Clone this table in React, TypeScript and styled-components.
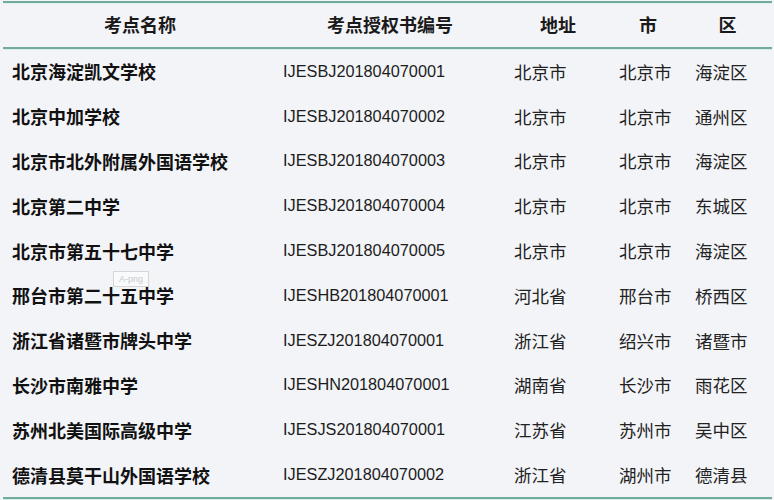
import styled, { createGlobalStyle } from "styled-components";

const GlobalStyle = createGlobalStyle`
  html, body {
    margin: 0;
    padding: 0;
    background: #f3f4f8;
  }
`;

const rows = [
  ["北京海淀凯文学校", "IJESBJ201804070001", "北京市", "北京市", "海淀区"],
  ["北京中加学校", "IJESBJ201804070002", "北京市", "北京市", "通州区"],
  ["北京市北外附属外国语学校", "IJESBJ201804070003", "北京市", "北京市", "海淀区"],
  ["北京第二中学", "IJESBJ201804070004", "北京市", "北京市", "东城区"],
  ["北京市第五十七中学", "IJESBJ201804070005", "北京市", "北京市", "海淀区"],
  ["邢台市第二十五中学", "IJESHB201804070001", "河北省", "邢台市", "桥西区"],
  ["浙江省诸暨市牌头中学", "IJESZJ201804070001", "浙江省", "绍兴市", "诸暨市"],
  ["长沙市南雅中学", "IJESHN201804070001", "湖南省", "长沙市", "雨花区"],
  ["苏州北美国际高级中学", "IJESJS201804070001", "江苏省", "苏州市", "吴中区"],
  ["德清县莫干山外国语学校", "IJESZJ201804070002", "浙江省", "湖州市", "德清县"],
];

const headers = ["考点名称", "考点授权书编号", "地址", "市", "区"];
const pads = [9, 6, 11, 6, 12];

const Page = styled.div`
  position: relative;
  width: 774px;
  height: 500px;
  padding: 1px 2px 0 3px;
  box-sizing: border-box;
  font-family: "Noto Sans CJK SC", sans-serif;
  color: #1c1c1c;
`;

const Table = styled.div`
  border-top: 2px solid #72ab9d;
  border-bottom: 2px solid #72ab9d;
  box-shadow: 0 1px 0 #d6efea, inset 0 1px 0 #dff2ee;
`;

const Row = styled.div<{ $head?: boolean }>`
  display: grid;
  grid-template-columns: 274px 226px 110px 70px 89px;
  height: ${(p) => (p.$head ? "44px" : "44.8px")};
  align-items: center;
  ${(p) =>
    p.$head &&
    `
    border-bottom: 2px solid #72ab9d;
    box-shadow: 0 1px 0 #d6efea;
  `}
`;

const HeadCell = styled.div`
  text-align: center;
  font-size: 18px;
  font-weight: 700;
  color: #1a1a1a;
  padding-bottom: 2px;
`;

const NameCell = styled.div<{ $pad: number }>`
  padding-left: ${(p) => p.$pad}px;
  font-size: 18px;
  font-weight: 700;
  color: #111;
  white-space: nowrap;
`;

const CodeCell = styled.div<{ $pad: number }>`
  padding-left: ${(p) => p.$pad}px;
  font-family: "Liberation Sans", "Noto Sans CJK SC", sans-serif;
  font-size: 16.3px;
  color: #1c1c1c;
  white-space: nowrap;
`;

const PlainCell = styled.div<{ $pad: number }>`
  padding-left: ${(p) => p.$pad}px;
  font-size: 17.5px;
  color: #222;
  white-space: nowrap;
`;

const Watermark = styled.div`
  position: absolute;
  left: 113px;
  top: 271px;
  width: 34px;
  height: 14px;
  border: 1px solid #d6d6d8;
  background: rgba(255, 255, 255, 0.5);
  font-family: "Liberation Sans", sans-serif;
  font-size: 9px;
  color: #c8c8cc;
  display: flex;
  align-items: center;
  justify-content: center;
`;

export default function App() {
  return (
    <>
      <GlobalStyle />
      <Page>
        <Table>
          <Row $head>
            {headers.map((h) => (
              <HeadCell key={h}>{h}</HeadCell>
            ))}
          </Row>
          {rows.map((r) => (
            <Row key={r[1]}>
              <NameCell $pad={pads[0]}>{r[0]}</NameCell>
              <CodeCell $pad={pads[1]}>{r[1]}</CodeCell>
              <PlainCell $pad={pads[2]}>{r[2]}</PlainCell>
              <PlainCell $pad={pads[3]}>{r[3]}</PlainCell>
              <PlainCell $pad={pads[4]}>{r[4]}</PlainCell>
            </Row>
          ))}
        </Table>
        <Watermark>A-png</Watermark>
      </Page>
    </>
  );
}
